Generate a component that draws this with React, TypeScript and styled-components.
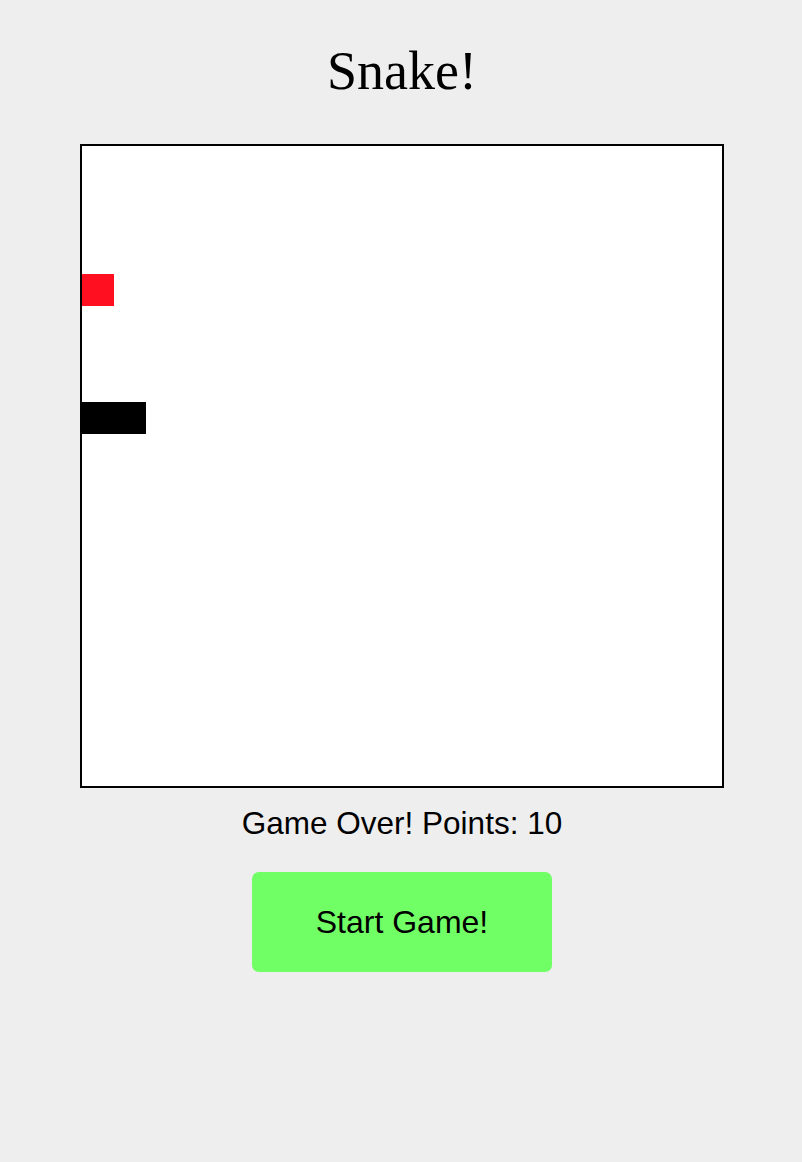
import React from "react";
import styled, { createGlobalStyle } from "styled-components";

const GlobalStyle = createGlobalStyle`
  html, body {
    margin: 0;
    padding: 0;
    background: #eeeeee;
  }
  body {
    font-family: "Liberation Serif", "Times New Roman", serif;
  }
`;

const CELL = 32;
const GRID = 20;

const Page = styled.div`
  display: flex;
  flex-direction: column;
  align-items: center;
  padding: 40px 0 0 2px;
  min-height: 1162px;
  box-sizing: border-box;
`;

const Title = styled.h1`
  margin: 0;
  font-family: "Liberation Serif", "Times New Roman", serif;
  font-weight: 400;
  font-size: 54px;
  line-height: 62px;
  color: #000;
`;

const Board = styled.div`
  margin-top: 42px;
  width: ${CELL * GRID}px;
  height: ${CELL * GRID}px;
  border: 2px solid #000;
  background: #fff;
  display: grid;
  grid-template-columns: repeat(${GRID}, ${CELL}px);
  grid-template-rows: repeat(${GRID}, ${CELL}px);
`;

const Cell = styled.div<{ $kind: "food" | "snake" }>`
  background: ${(p) => (p.$kind === "food" ? "#ff0f1f" : "#000")};
`;

const Status = styled.p`
  margin: 17px 0 0;
  font-family: "Liberation Sans", Arial, sans-serif;
  font-size: 31.5px;
  line-height: normal;
  color: #000;
`;

const StartButton = styled.button`
  margin-top: 30px;
  width: 300px;
  height: 100px;
  border: none;
  border-radius: 7px;
  background: #71ff66;
  font-family: "Liberation Sans", Arial, sans-serif;
  font-size: 32px;
  color: #000;
  display: flex;
  align-items: center;
  justify-content: center;
  padding: 0;
  cursor: pointer;
`;

const cells: { x: number; y: number; kind: "food" | "snake" }[] = [
  { x: 0, y: 4, kind: "food" },
  { x: 0, y: 8, kind: "snake" },
  { x: 1, y: 8, kind: "snake" },
];

export default function App() {
  return (
    <>
      <GlobalStyle />
      <Page>
        <Title>Snake!</Title>
        <Board>
          {cells.map((c, i) => (
            <Cell
              key={i}
              $kind={c.kind}
              style={{ gridColumn: c.x + 1, gridRow: c.y + 1 }}
            />
          ))}
        </Board>
        <Status>Game Over! Points: 10</Status>
        <StartButton>Start Game!</StartButton>
      </Page>
    </>
  );
}
